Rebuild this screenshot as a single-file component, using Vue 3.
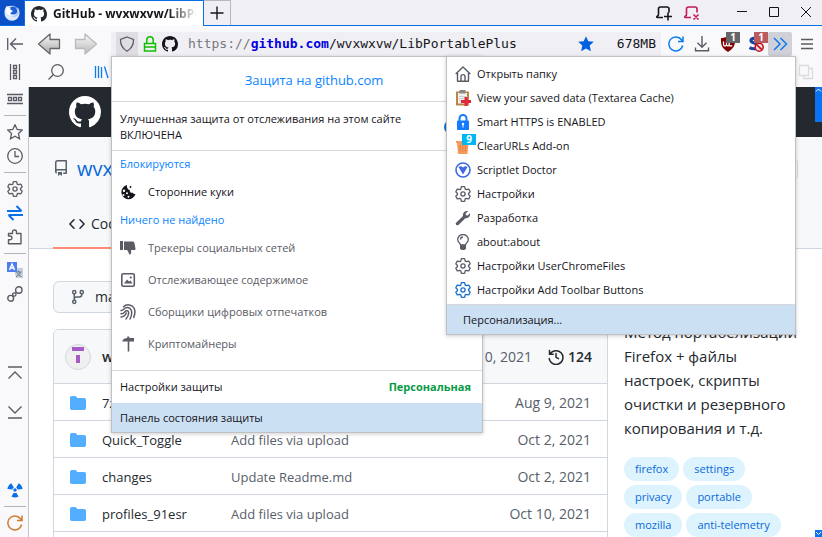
<script setup>
import { ref } from 'vue'

const address = ref('LibPortablePlus')
const protectionOn = ref(true)

const sideGroups = [
  ['rowstrip', '-', 'star', 'clock', '-', 'gear', 'swap', 'puzzle', '-', 'translate', 'chain'],
  ['top', 'bottom'],
  ['radiation', '-', 'reload'],
]
const sideLabels = {
  rowstrip: 'Панель', star: 'Закладки', clock: 'Журнал', gear: 'Настройки', swap: 'Синхронизация',
  puzzle: 'Дополнения', translate: 'Перевод', chain: 'Ссылка', top: 'Вверх', bottom: 'Вниз',
  radiation: 'Очистка', reload: 'Перезапуск',
}
const trackers = [
  { icon: 'thumb', label: 'Трекеры социальных сетей' },
  { icon: 'image', label: 'Отслеживающее содержимое' },
  { icon: 'finger', label: 'Сборщики цифровых отпечатков' },
  { icon: 'pick', label: 'Криптомайнеры' },
]
const overflow = [
  { icon: 'home', label: 'Открыть папку' },
  { icon: 'clipboard', label: 'View your saved data (Textarea Cache)' },
  { icon: 'lockfill', label: 'Smart HTTPS is ENABLED' },
  { icon: 'trash', label: 'ClearURLs Add-on', badge: '9' },
  { icon: 'doctor', label: 'Scriptlet Doctor' },
  { icon: 'gear', label: 'Настройки' },
  { icon: 'wrench', label: 'Разработка' },
  { icon: 'bulb', label: 'about:about' },
  { icon: 'gear', label: 'Настройки UserChromeFiles' },
  { icon: 'gear', label: 'Настройки Add Toolbar Buttons', tone: 'blue' },
]
const files = [
  { name: '7z', message: '', date: 'Aug 9, 2021' },
  { name: 'Quick_Toggle', message: 'Add files via upload', date: 'Oct 2, 2021' },
  { name: 'changes', message: 'Update Readme.md', date: 'Oct 2, 2021' },
  { name: 'profiles_91esr', message: 'Add files via upload', date: 'Oct 10, 2021' },
  { name: '', message: '', date: '' },
]
const topics = ['firefox', 'settings', 'privacy', 'portable', 'mozilla', 'anti-telemetry']
</script>

<template>
  <div class="browser">
    <svg class="defs" aria-hidden="true">
      <symbol id="octocat" viewBox="0 0 16 16"><path fill="currentColor" d="M8 0C3.58 0 0 3.58 0 8c0 3.54 2.29 6.53 5.47 7.59.4.07.55-.17.55-.38 0-.19-.01-.82-.01-1.49-2.01.37-2.53-.49-2.69-.94-.09-.23-.48-.94-.82-1.13-.28-.15-.68-.52-.01-.53.63-.01 1.08.58 1.23.82.72 1.21 1.87.87 2.33.66.07-.52.28-.87.51-1.07-1.78-.2-3.64-.89-3.64-3.95 0-.87.31-1.59.82-2.15-.08-.2-.36-1.02.08-2.12 0 0 .67-.21 2.2.82.64-.18 1.32-.27 2-.27.68 0 1.36.09 2 .27 1.53-1.04 2.2-.82 2.2-.82.44 1.1.16 1.92.08 2.12.51.56.82 1.27.82 2.15 0 3.07-1.87 3.75-3.65 3.95.29.25.54.73.54 1.48 0 1.07-.01 1.93-.01 2.2 0 .21.15.46.55.38A8.013 8.013 0 0016 8c0-4.42-3.58-8-8-8z"/></symbol>
      <symbol id="firefox" viewBox="0 0 16 16"><path fill="#dce9fb" d="M2.600 1.200C1 3 .3 5.400.5 8.200a7.500 7.500 0 0 0 15 .3c.2-2.400-.6-4.700-2.100-6.300l.1 2.300C12.500 2.500 11 1.200 9 .7z"/><circle cx="9.300" cy="5.500" r="4.100" fill="#1d5fd8"/><path fill="#a9c8f4" d="M10 1.200c2.600 1.500 3.700 4 3 6.600-.8 2.600-3.400 3.900-5.600 3.300 3.600 2.400 7.800-.5 7.300-4.600C14.300 3.600 12.500 1.800 10 1.200z"/><path fill="#fff" d="M2.600 1.200c.6 1.200 1.600 1.600 3 1.900 1.200.2 1.400 1 .9 1.800l2.400.9c-.3 1.100-1.300 1.300-2 1.700-.8.500-.6 1.500.3 1.900-2 .8-4.500-.2-5-2.500z"/></symbol>
      <symbol id="tohome" viewBox="0 0 16 16"><path class="ln" d="M.7 2v12M4 8h12M9 2.500 3.500 8 9 13.500"/></symbol>
      <symbol id="search" viewBox="0 0 16 16"><circle class="ln" cx="9.500" cy="6.500" r="5.800"/><path class="ln" d="M5.200 10.800.5 15.500"/></symbol>
      <symbol id="colstrip" viewBox="0 0 16 16"><path class="ln" d="M3.500 0v16M12.500 0v16M6.500 1.500h3v3h-3zM6.500 6.500h3v3h-3zM6.500 11.500h3v3h-3z"/></symbol>
      <symbol id="rowstrip" viewBox="0 0 16 16"><path class="ln" d="M0 3.500h16M0 12.500h16M1.500 6.500h3v3h-3zM6.500 6.500h3v3h-3zM11.500 6.500h3v3h-3z"/></symbol>
      <symbol id="library" viewBox="0 0 16 16"><path class="ln" d="M1.500 2v12M4.500 2v12M7.500 3v11M10.500 2.500 14 14"/></symbol>
      <symbol id="shield" viewBox="0 0 16 16"><path class="ln" stroke-width="1.300" d="M8 1 14.500 3.400c.2 5-1.500 8.900-6.500 11.900C3 12.300 1.300 8.400 1.500 3.400z"/></symbol>
      <symbol id="lock" viewBox="0 0 16 16"><path class="ln" stroke-width="1.500" d="M2.500 7.500h11v7.500h-11zM4.800 7.500V4a3.200 3.200 0 0 1 6.400 0v3.500M2.500 11h11"/></symbol>
      <symbol id="starfill" viewBox="0 0 16 16"><path fill="currentColor" d="m8 .2 2.300 5 5.500.6-4.100 3.700 1.200 5.700L8 12.400l-4.900 2.800 1.200-5.700L.2 5.800l5.500-.6z"/></symbol>
      <symbol id="star" viewBox="0 0 16 16"><path class="ln" d="m8 .8 2.200 4.700 5.100.6-3.800 3.500 1 5.200L8 12.200l-4.500 2.600 1-5.200L.7 6.100l5.100-.6z"/></symbol>
      <symbol id="reload" viewBox="0 0 16 16"><path class="ln" stroke-width="1.500" d="M14.700 9.500A7 7 0 1 1 13.500 3.700L15 5.500M15 .5v5H10"/></symbol>
      <symbol id="download" viewBox="0 0 16 16"><path class="ln" stroke-width="1.400" d="M8 0v11M3.500 6.800 8 11.300l4.500-4.500M1.500 11.500v3.200h13v-3.200"/></symbol>
      <symbol id="ublock" viewBox="0 0 16 16"><path fill="#800000" d="M8 0c2.500 1.500 4.500 2 7 2 .3 6.500-.5 10-7 14C1.500 12 .7 8.500 1 2c2.500 0 4.500-.5 7-2z"/><path fill="none" stroke="#fff" stroke-width="1.300" d="M3.500 5.500v3c0 2 3 2 3 0v-3M6.500 8.200c0 1.600 1.300 2.100 2.500 1.500M12 6.500a1.900 1.900 0 1 0 .2 3"/></symbol>
      <symbol id="noscript" viewBox="0 0 16 16"><path fill="none" stroke="#1746a0" stroke-width="3.200" d="M10.500 3.200C7.800 1.500 3 2 3 4.700s7 2 7 5.200-5 3.600-8.500 1.700"/><circle cx="11.200" cy="11.200" r="4" fill="#f5dcdc" stroke="#c31622" stroke-width="1.600"/><path stroke="#c31622" stroke-width="1.800" d="m8.500 8.700 5.300 5"/></symbol>
      <symbol id="chevrons" viewBox="0 0 16 16"><path class="ln" stroke-width="1.500" d="m2 2 6 6-6 6M8.500 2l6 6-6 6"/></symbol>
      <symbol id="menu" viewBox="0 0 16 16"><path class="ln" stroke-width="1.400" d="M2 3.500h12M2 8h12M2 12.500h12"/></symbol>
      <symbol id="squares" viewBox="0 0 16 16"><path class="ln" d="M1.500 1.500h9v10h-9zM10.500 4.500h4v10h-9v-3"/></symbol>
      <symbol id="clock" viewBox="0 0 16 16"><circle class="ln" cx="8" cy="8" r="7.300"/><path class="ln" d="M8 3v5.500h4"/></symbol>
      <symbol id="gear" viewBox="0 0 16 16"><path class="ln" stroke-width="1.300" stroke-linejoin="round" d="m6.300 1 .5-.4h2.400l.5.400.5 2.100 1 .6 2.100-.6.600.3 1.200 2.100-.1.600L13.500 7.500v1L15 9.900l.1.600-1.200 2.100-.6.300-2.100-.6-1 .6-.5 2.100-.5.400H6.800l-.5-.4-.5-2.100-1-.6-2.100.6-.6-.3L.9 10.500 1 9.900l1.500-1.400v-1L1 6.100l-.1-.6 1.200-2.100.6-.3 2.100.6 1-.6z"/><circle class="ln" stroke-width="1.300" cx="8" cy="8" r="2.100"/></symbol>
      <symbol id="swap" viewBox="0 0 16 16"><path fill="none" stroke="#0a70e8" stroke-width="2" d="M0 6h14.500M9.500 1l5 5M16 10H1.500M6.500 15l-5-5"/></symbol>
      <symbol id="puzzle" viewBox="0 0 16 16"><path class="ln" stroke-width="1.400" stroke-linejoin="round" d="M1.500 14.800v-4H3a1.900 1.900 0 0 0 0-3.800H1.500V4.500h4V3a2 2 0 0 1 4 0v1.500h4.500v10.300z"/></symbol>
      <symbol id="translate" viewBox="0 0 16 16"><path fill="#c5d0da" d="M7 6h9v10H9z"/><path stroke="#62788c" fill="none" d="M8.500 10h6M11.500 8.500V10M13.500 10c-1 3-3 4-4.500 4.500M10.500 11c1 2 2 3 4 3.500"/><path fill="#4f7df0" d="M0 0h10v10H0z"/><path fill="none" stroke="#fff" stroke-width="1.400" d="M2.500 8 5 2l2.500 6M3.500 6h3"/></symbol>
      <symbol id="chain" viewBox="0 0 16 16"><circle class="ln" stroke-width="1.400" cx="11.800" cy="4" r="3.200"/><circle class="ln" stroke-width="1.400" cx="3.700" cy="12.300" r="2.900"/><circle class="ln" cx="7.300" cy="8.500" r="1.700"/><path class="ln" d="m8.500 7.300 1.200-1.200M6 9.800 5.200 10.600"/></symbol>
      <symbol id="top" viewBox="0 0 16 16"><path class="ln" stroke-width="1.400" d="M1 2h14M1.500 13.500 8 7l6.500 6.500"/></symbol>
      <symbol id="bottom" viewBox="0 0 16 16"><path class="ln" stroke-width="1.400" d="M1 14h14M1.500 2.500 8 9l6.500-6.500"/></symbol>
      <symbol id="radiation" viewBox="0 0 16 16"><g fill="#0a70e8"><circle cx="8" cy="8" r="1.700"/><path d="M.4 7A8 8 0 0 1 4.300 1.200L6.800 5.400A3 3 0 0 0 5.300 7.600zM15.600 7a8 8 0 0 0-3.900-5.800L9.200 5.400a3 3 0 0 1 1.500 2.200zM4.500 14.500c2 1.300 5 1.300 7 0L9.300 10.800a3 3 0 0 1-2.600 0z"/></g></symbol>
      <symbol id="cookie" viewBox="0 0 16 16"><path fill="currentColor" fill-rule="evenodd" d="M7 1a7.200 7.200 0 1 0 8.500 9c-1.300.2-2.200-.3-2.700-1.300-2 .5-3.300-.8-3-2.500C7.700 5.500 6.500 3.500 7 1zM4 5.500a1.200 1.200 0 1 1 0 2.400 1.200 1.200 0 0 1 0-2.400zm3 2.800a1 1 0 1 1 0 2 1 1 0 0 1 0-2zM3.500 10a1 1 0 1 1 0 2 1 1 0 0 1 0-2zm5 1.800a1 1 0 1 1 0 2 1 1 0 0 1 0-2z"/><circle cx="10.500" cy="3" r=".9" fill="currentColor"/></symbol>
      <symbol id="thumb" viewBox="0 0 16 16"><path fill="currentColor" d="M0 1h3v9H0zM4 1.500h9c1 0 1.300 1 1.600 2.500l.9 4.500c.2 1-.3 1.500-1 1.500H11c.4 2 .3 4.500-1 4.500-1.500 0-1-2.500-3-4.500H4z"/></symbol>
      <symbol id="image" viewBox="0 0 16 16"><rect class="ln" stroke-width="1.600" x="1.800" y="1.800" width="12.500" height="12.500" rx="1.500"/><path fill="currentColor" d="m4 11.500 3-4 2 2 1.500-1 2 3z"/><circle cx="10.800" cy="5.500" r="1.100" fill="currentColor"/></symbol>
      <symbol id="finger" viewBox="0 0 16 16"><path class="ln" stroke-width="1.500" stroke-linecap="round" d="M3.500 2.800C6.500-.3 12 .5 14 4c1.200 2.500 1.200 6-.3 9.500M1 6.500c1.200.3 2-.5 2.700-1.200C6 2.800 10 3 11.300 6.200c.8 2.600.2 6-1.300 8.800M1 9.800c2 .2 3-.8 3.800-2C6 6 8.500 6.400 8.700 8.500c.1 2.200-.9 4.500-2.700 6.500M1 13c2.500-.2 4.300-1.500 5.300-4"/></symbol>
      <symbol id="pick" viewBox="0 0 16 16"><path fill="currentColor" d="M2.500 5.500V4.200C4 2.700 5.500 2 7.300 2V.5h2V2H14v3.500H9.300V15.500H7.700V5.500z"/></symbol>
      <symbol id="home" viewBox="0 0 16 16"><path class="ln" stroke-width="1.400" stroke-linejoin="round" d="M.7 8 8 .9 15.300 8M2.500 7v8.300h11V7M6 15v-4.500c0-2.500 4-2.500 4 0V15"/></symbol>
      <symbol id="clipboard" viewBox="0 0 16 16"><path fill="#b9864a" d="M1 1.500h13v14H1z"/><path fill="#f1f1f1" d="M3 3h9v10.500H3z"/><path fill="#888" d="M4.500 0h6v3.500h-6z"/><path stroke="#ccc" d="M4 6.500h7M4 8.500h5M4 10.500h4"/><path fill="#e3243d" d="M9.500 7h3v3H16v3h-3.500v3h-3v-3H6v-3h3.500z"/></symbol>
      <symbol id="lockfill" viewBox="0 0 16 16"><rect x="2" y="6.500" width="12" height="9.500" rx="1" fill="#147bff"/><path fill="none" stroke="#147bff" stroke-width="2" d="M4.500 7V4.500a3.500 3.500 0 0 1 7 0V7"/><circle cx="8" cy="10" r="1.200" fill="#fff"/><path fill="#fff" d="M7.500 10h1v3.500h-1z"/></symbol>
      <symbol id="trash" viewBox="0 0 16 16"><path fill="#f59b5c" d="M1 3h13v2H1zM2 5h11.500l-1 11h-9.500z"/><path stroke="#e08345" d="m5 7 .3 6.500M7.800 7v6.500M10.500 7l-.3 6.500"/></symbol>
      <symbol id="doctor" viewBox="0 0 16 16"><circle cx="8" cy="8" r="7" fill="none" stroke="#4068e0" stroke-width="1.600"/><path fill="#4068e0" d="M3.500 5c1.500-1.300 3-.8 4.500.5 1.500-1.300 3-1.800 4.500-.5L8 12.500z"/></symbol>
      <symbol id="wrench" viewBox="0 0 16 16"><path fill="currentColor" d="M13 1.200 10.600 3.600l.3 1.700 1.700.3L15 3.200c.8 3-1.600 5.600-4.600 5l-7 6.700c-1.600 1.300-3.500-.5-2.300-2.200L8 5.900C7.300 3 10 .3 13 1.200z"/></symbol>
      <symbol id="bulb" viewBox="0 0 16 16"><path class="ln" stroke-width="1.300" d="M5.500 11C5.500 9 2.700 8.500 2.700 5.500a5.300 5 0 0 1 10.600 0C13.300 8.500 10.500 9 10.500 11zM5.500 5.500c0-1.500 1-2.500 2.500-2.500"/><path fill="currentColor" d="M5 11h6v3.500L9.500 16h-3L5 14.500z"/></symbol>
      <symbol id="tabplus" viewBox="0 0 18 16"><path class="ln" stroke-width="1.600" d="M8 12.500H2.500c-1 0-1-1 0-1.500 1.500-.5 1-2 1-3V4c0-1.500.7-2 2-2H12c1.500 0 2 .7 2 2v3.500M9 11.500h8M13 7.500v8"/></symbol>
      <symbol id="tabclose" viewBox="0 0 18 16"><path class="ln" stroke-width="1.600" d="M8 12.500H2.500c-1 0-1-1 0-1.500 1.500-.5 1-2 1-3V4c0-1.500.7-2 2-2H12c1.500 0 2 .7 2 2v3.500M10.500 9.500l5 5M15.500 9.500l-5 5"/></symbol>
      <symbol id="repo" viewBox="0 0 16 16"><path fill="currentColor" fill-rule="evenodd" d="M2 2.500A2.500 2.500 0 0 1 4.500 0h8.750a.75.75 0 0 1 .75.750v12.500a.75.75 0 0 1-.75.750h-2.500a.75.75 0 1 1 0-1.500h1.750v-2h-8a1 1 0 0 0-.714 1.700.75.75 0 0 1-1.072 1.050A2.495 2.495 0 0 1 2 11.500Zm10.500-1h-8a1 1 0 0 0-1 1v6.708A2.486 2.486 0 0 1 4.500 9h8ZM5 12.250a.25.25 0 0 1 .25-.25h3.500a.25.25 0 0 1 .25.250v3.250a.25.25 0 0 1-.4.200l-1.450-1.087a.249.249 0 0 0-.3 0L5.400 15.700a.25.25 0 0 1-.4-.2Z"/></symbol>
      <symbol id="code" viewBox="0 0 16 16"><path class="ln" stroke-width="1.500" stroke-linecap="round" stroke-linejoin="round" d="M5 3.700.9 8 5 12.300M11 3.700 15.100 8 11 12.300"/></symbol>
      <symbol id="branch" viewBox="0 0 16 16"><path class="ln" stroke-width="1.500" d="M4.250 5v6M11.750 5v.5c0 1.500-.8 2.500-2.200 2.500H6.500c-1.500 0-2.250.7-2.250 2"/><g class="ln" stroke-width="1.500"><circle cx="4.250" cy="3.200" r="1.600"/><circle cx="4.250" cy="12.800" r="1.600"/><circle cx="11.750" cy="3.200" r="1.600"/></g></symbol>
      <symbol id="folder" viewBox="0 0 16 16"><path fill="currentColor" d="M1.750 1A1.750 1.750 0 0 0 0 2.750v10.500C0 14.216.784 15 1.750 15h12.500A1.750 1.750 0 0 0 16 13.250v-8.500A1.750 1.750 0 0 0 14.250 3H7.500a.25.25 0 0 1-.2-.1l-.9-1.200C6.070 1.260 5.550 1 5 1H1.750Z"/></symbol>
      <symbol id="history" viewBox="0 0 16 16"><path class="ln" stroke-width="1.500" stroke-linecap="round" d="M1.500 1.500v3.700h3.700M2 5.200A6.900 6.900 0 1 1 1.200 9.500M8 4.500V8.300l2.500 1.300"/></symbol>
      <symbol id="arrow" viewBox="0 0 24 22"><path fill="url(#metal)" stroke="currentColor" stroke-width="1.300" stroke-linejoin="round" d="M1.500 11 13 1v5.500h9.500v9H13V21z"/></symbol>
      <linearGradient id="metal" x1="0" y1="0" x2="0" y2="1"><stop offset="0" stop-color="#fafafa"/><stop offset="1" stop-color="#a9a9a9"/></linearGradient>
    </svg>

    <header class="titlebar">
      <button class="app" aria-label="Firefox"><svg class="i16"><use href="#firefox" /></svg></button>
      <div class="tab">
        <svg class="i16"><use href="#octocat" /></svg>
        <span class="tab-title">GitHub - wvxwxvw/LibPortablePlus</span>
      </div>
      <button class="newtab" aria-label="Новая вкладка"><svg class="i16" viewBox="0 0 16 16"><path class="ln" stroke-width="1.400" d="M8 1.500v13M1.500 8h13" /></svg></button>
      <div class="window-tools">
        <button class="dark" aria-label="Добавить вкладку"><svg class="i18"><use href="#tabplus" /></svg></button>
        <button class="crimson" aria-label="Закрыть вкладку"><svg class="i18"><use href="#tabclose" /></svg></button>
      </div>
      <div class="window-buttons">
        <button aria-label="Свернуть"><svg viewBox="0 0 12 12"><path class="thin" d="M1 5.500h10" /></svg></button>
        <button aria-label="Развернуть"><svg viewBox="0 0 12 12"><path class="thin" d="M1.500 1.500h9v9h-9z" /></svg></button>
        <button aria-label="Закрыть"><svg viewBox="0 0 12 12"><path class="thin" d="m1 1 10 10M11 1 1 11" /></svg></button>
      </div>
    </header>

    <nav class="navbar">
      <button class="cell" aria-label="Панель"><svg class="i16"><use href="#tohome" /></svg></button>
      <button class="back" aria-label="Назад"><svg><use href="#arrow" /></svg></button>
      <button class="forward" aria-label="Вперёд"><svg><use href="#arrow" /></svg></button>
      <div class="urlbar">
        <button class="shield" aria-label="Защита"><svg class="i16"><use href="#shield" /></svg></button>
        <svg class="i16 green"><use href="#lock" /></svg>
        <svg class="i16"><use href="#octocat" /></svg>
        <label class="address"><span class="scheme">https://</span><b>github.com</b><span>/wvxwxvw/</span><input v-model="address" aria-label="Адрес" /></label>
        <button class="blue" aria-label="Закладка"><svg class="i16"><use href="#starfill" /></svg></button>
        <span class="memory">678MB</span>
      </div>
      <div class="actions">
        <button class="azure" aria-label="Обновить"><svg class="i16"><use href="#reload" /></svg></button>
        <button aria-label="Загрузки"><svg class="i16"><use href="#download" /></svg></button>
        <button class="ext" aria-label="uBlock"><svg class="i16"><use href="#ublock" /></svg><span class="badge">1</span></button>
        <button class="ext" aria-label="NoScript"><svg class="i16"><use href="#noscript" /></svg><span class="badge red">1</span></button>
      </div>
      <button class="more" aria-label="Ещё"><svg class="i16"><use href="#chevrons" /></svg></button>
      <button class="cell" aria-label="Меню"><svg class="i16"><use href="#menu" /></svg></button>
    </nav>

    <div class="bookmarks">
      <button class="cell" aria-label="Колонка"><svg class="i16"><use href="#colstrip" /></svg></button>
      <button aria-label="Поиск"><svg class="i16"><use href="#search" /></svg></button>
      <button class="azure" aria-label="Библиотека"><svg class="i16"><use href="#library" /></svg></button>
      <button class="pale" aria-label="Окна"><svg class="i16"><use href="#squares" /></svg></button>
    </div>

    <div class="body">
      <aside class="sidebar">
        <div v-for="(group, g) in sideGroups" :key="g" class="side-group">
          <template v-for="(item, i) in group" :key="i">
            <hr v-if="item === '-'" />
            <button v-else :class="item" :aria-label="sideLabels[item]"><svg class="i16"><use :href="'#' + item" /></svg></button>
          </template>
        </div>
      </aside>

      <main class="page">
        <div class="gh-header"><a href="#" aria-label="GitHub"><svg><use href="#octocat" /></svg></a></div>
        <div class="repo-head">
          <div class="repo-title">
            <svg class="i16"><use href="#repo" /></svg>
            <a href="#">wvxwxvw</a>
            <button class="fork" aria-label="Fork"></button>
          </div>
          <a href="#" class="repo-tab"><svg class="i16"><use href="#code" /></svg>Code</a>
        </div>
        <div class="content">
          <section class="main-col">
            <button class="branch"><svg class="i16"><use href="#branch" /></svg>master</button>
            <div class="filebox">
              <div class="commit">
                <svg class="avatar" viewBox="0 0 26 26"><circle cx="13" cy="13" r="12.500" fill="#f0f0f0" stroke="#d0d7de" /><path fill="#a65bc5" d="M7 3h12v4H7zM11 11h4v8h-4z" /></svg>
                <b>wvxwxvw</b>
                <span class="when">Oct 10, 2021</span>
                <svg class="i16"><use href="#history" /></svg>
                <b>124</b>
              </div>
              <table>
                <tbody>
                  <tr v-for="(file, i) in files" :key="i">
                    <td class="kind"><svg class="i16"><use href="#folder" /></svg></td>
                    <td class="name">{{ file.name }}</td>
                    <td class="message">{{ file.message }}</td>
                    <td class="date">{{ file.date }}</td>
                  </tr>
                </tbody>
              </table>
            </div>
          </section>
          <section class="about">
            <p>Метод портабелизации Firefox + файлы настроек, скрипты очистки и резервного копирования и т.д.</p>
            <div class="topics"><a v-for="t in topics" :key="t" href="#">{{ t }}</a></div>
          </section>
        </div>
        <div class="scroll-thumb"><svg viewBox="0 0 7 7"><path fill="none" stroke="#fff" d="m1 4.500 2.500-2.500L6 4.500" /></svg></div>
        <div class="scroll-end"><svg viewBox="0 0 7 7"><path fill="none" stroke="#fff" d="m1 2 2.500 2.500L6 2" /></svg></div>
      </main>
    </div>

    <section class="popup protection">
      <h2>Защита на github.com</h2>
      <label class="etp">
        <span>Улучшенная защита от отслеживания на этом сайте ВКЛЮЧЕНА</span>
        <input v-model="protectionOn" type="checkbox" />
      </label>
      <h3>Блокируются</h3>
      <div class="tracker on"><svg class="i16"><use href="#cookie" /></svg>Сторонние куки</div>
      <h3>Ничего не найдено</h3>
      <div v-for="t in trackers" :key="t.icon" class="tracker"><svg class="i16"><use :href="'#' + t.icon" /></svg>{{ t.label }}</div>
      <button class="settings"><span>Настройки защиты</span><b>Персональная</b></button>
      <button class="dashboard">Панель состояния защиты</button>
    </section>

    <section class="popup overflow">
      <div class="overflow-list">
        <button v-for="o in overflow" :key="o.label">
          <span class="glyph" :class="o.tone"><svg class="i16"><use :href="'#' + o.icon" /></svg><span v-if="o.badge" class="count">{{ o.badge }}</span></span>
          {{ o.label }}
        </button>
      </div>
      <button class="customize">Персонализация...</button>
    </section>
  </div>
</template>

<style>
body { margin: 0; overflow: hidden; }
</style>

<style scoped>
* { box-sizing: border-box; }
.browser { position: relative; display: flex; flex-direction: column; height: 100vh; overflow: hidden; background: #f9f9fb; color: #15141a; font: 11px/16px "Open Sans", "Noto Sans", sans-serif; }
.defs { position: absolute; width: 0; height: 0; }
button { display: flex; align-items: center; justify-content: center; border: 0; padding: 0; background: none; color: #5b5b66; font: inherit; }
a { text-decoration: none; }
svg { display: block; flex: none; }
.i16 { width: 16px; height: 16px; }
.i18 { width: 18px; height: 16px; }
.ln { fill: none; stroke: currentColor; }
.ln:not([stroke-width]) { stroke-width: 1.3; }
.thin { fill: none; stroke: currentColor; }
.blue { color: #0060df; }
.azure { color: #0a7cf0; }
.green { color: #12bc00; }

.titlebar { display: flex; flex: none; height: 26px; background: #f0f0f4; border-bottom: 1px solid #0a70e8; }
.titlebar button { color: #15141a; }
.titlebar .app { width: 24px; background: #0c50c8; }
.tab { display: flex; align-items: center; gap: 6px; width: 180px; height: 26px; padding: 0 6px; border: 1px solid #0a70e8; border-bottom: 0; background: #fff; overflow: hidden; color: #24292f; }
.tab-title { flex: 1; overflow: hidden; white-space: nowrap; font-size: 12px; font-weight: 700; color: #15141a; mask-image: linear-gradient(to right, #000 80%, transparent); }
.titlebar .newtab { width: 27px; border-top: 1px solid #b8b8bc; border-right: 1px solid #b8b8bc; }
.window-tools { display: flex; gap: 10px; margin-left: auto; padding-right: 25px; }
.titlebar .crimson { color: #c4185a; }
.window-buttons { display: flex; }
.window-buttons button { width: 32px; padding-bottom: 2px; }
.window-buttons svg { width: 12px; height: 12px; }

.navbar { display: flex; flex: none; align-items: center; height: 31px; padding-top: 6px; padding-bottom: 1px; }
.cell { flex: none; width: 30px; height: 24px; }
.back { width: 37px; color: #666; }
.forward { width: 38px; margin-right: 6px; color: #aaa; opacity: .8; }
.back svg, .forward svg { width: 24px; height: 22px; }
.forward svg { transform: scaleX(-1); }
.urlbar { display: flex; flex: 1; align-items: center; gap: 4px; height: 24px; padding: 0 5px; background: #f0f0f4; min-width: 0; }
.urlbar .shield { width: 22px; height: 24px; background: #dedee2; }
.urlbar .blue { color: #0060df; }
.address { display: flex; flex: 1; align-items: center; padding-left: 6px; min-width: 0; font: 13px/20px "DejaVu Sans Mono", monospace; color: #15141a; }
.address .scheme { color: #77777d; }
.address b { color: #0000e0; }
.address input { flex: 1; min-width: 0; border: 0; padding: 0; background: none; color: inherit; font: inherit; outline: 0; }
.memory { padding-left: 19px; font: 13px/20px "DejaVu Sans Mono", monospace; }
.actions { display: flex; align-items: center; gap: 10px; padding: 0 2px 0 7px; }
.ext { position: relative; margin-right: 2px; }
.badge { position: absolute; left: 6px; top: -4px; width: 14px; height: 11px; background: #66666a; color: #fff; font: 700 10px/11px "Open Sans", sans-serif; text-align: center; }
.badge.red { background: #b85c60; }
.more { width: 24px; height: 24px; border-radius: 2px; background: #d0d0d8; }
.more, .navbar .azure { color: #0a7cf0; }

.bookmarks { display: flex; flex: none; align-items: center; height: 30px; }
.bookmarks button:nth-child(2) { margin: 0 30px 0 18px; }
.bookmarks .azure { color: #0a7cf0; }
.pale { margin-left: auto; padding-right: 8px; }
.bookmarks .pale { color: #dcdce0; }

.body { display: flex; flex: 1; min-height: 0; }
.sidebar { display: flex; flex: none; flex-direction: column; justify-content: space-between; width: 29px; padding-bottom: 2px; border-right: 1px solid #c4c4c8; }
.side-group { display: flex; flex-direction: column; }
.sidebar button { height: 24px; padding-left: 2px; }
.sidebar hr { width: 22px; margin: 4px 3px 4px 4px; border: 0; border-top: 1px solid #b4b4b8; }
.sidebar .bottom { margin-top: 15px; }
.sidebar .reload { color: #d07a2e; }

.page { position: relative; flex: 1; min-width: 0; overflow: hidden; background: #fff; color: #24292f; font: 14px/20px "Open Sans", "Noto Sans", sans-serif; }
.gh-header { display: flex; align-items: center; height: 50px; padding-left: 40px; background: #24292f; color: #fff; }
.gh-header a { color: inherit; }
.gh-header svg { width: 32px; height: 32px; }
.repo-head { height: 112px; padding: 17px 24px 0 24px; background: #f6f8fa; border-bottom: 1px solid #d0d7de; }
.repo-title { display: flex; align-items: center; gap: 8px; height: 30px; font-size: 20px; color: #57606a; }
.repo-title svg { margin-bottom: 3px; }
.repo-title a { color: #0969da; }
.fork { width: 60px; height: 24px; margin-left: auto; border: 1px solid #d8dce0; border-radius: 6px; }
.repo-tab { display: inline-flex; align-items: center; gap: 6px; height: 48px; margin-top: 17px; padding: 0 16px; border-bottom: 2px solid #fd8c73; color: #24292f; }
.content { display: flex; gap: 16px; padding: 32px 16px 0 24px; }
.main-col { flex: 1; min-width: 0; }
.branch { gap: 9px; height: 32px; padding: 0 16px; border: 1px solid #d0d7de; border-radius: 6px; background: #f6f8fa; color: #24292f; }
.branch svg { color: #57606a; }
.filebox { margin-top: 16px; border: 1px solid #d0d7de; border-radius: 6px 6px 0 0; overflow: hidden; }
.commit { display: flex; align-items: center; height: 53px; padding: 0 15px 0 11px; background: #f6f8fa; }
.commit b { font-weight: 600; }
.avatar { width: 26px; height: 26px; margin-right: 11px; }
.when { margin-left: auto; margin-right: 16px; color: #57606a; }
.commit .i16 { margin-right: 4px; }
table { width: 100%; border-collapse: collapse; table-layout: fixed; }
td { height: 37px; padding: 2px 0 0; border-top: 1px solid #d0d7de; white-space: nowrap; }
.kind { width: 48px; padding-left: 16px; color: #54aeff; }
.name { width: 129px; font-size: 13px; }
.message { color: #57606a; font-size: 13px; }
.date { width: 110px; padding-right: 16px; text-align: right; color: #57606a; }
.about { width: 182px; flex: none; padding-top: 39px; }
.about p { margin: 0 0 17px; font-size: 15px; line-height: 24px; }
.topics { display: flex; flex-wrap: wrap; gap: 4px; }
.topics a { padding: 0 11px; border-radius: 12px; background: #ddf4ff; color: #0969da; font-size: 11px; line-height: 24px; }
.scroll-thumb, .scroll-end { position: absolute; right: 0; top: 0; width: 7px; height: 35px; background: #0a74f0; }
.scroll-end { top: auto; bottom: 0; height: 7px; }

.popup { position: absolute; top: 56px; border: 1px solid #c0c0c4; background: #fff; box-shadow: 0 1px 4px rgba(0, 0, 0, .2); }
.popup button { color: #15141a; }
.protection { left: 111px; width: 372px; }
h2, h3 { margin: 0; font-weight: 400; color: #0a84ff; }
h2 { padding: 2px 0 0 34px; border-bottom: 1px solid #d8d8dc; font-size: 13px; line-height: 42px; text-align: center; }
.etp { display: flex; align-items: center; justify-content: space-between; height: 49px; padding: 1px 8px 0; border-bottom: 1px solid #d8d8dc; }
.etp span { width: 300px; }
.etp input { appearance: none; width: 30px; height: 14px; margin: 0; border-radius: 7px; background: #0a70d8; }
h3 { padding: 4px 8px 3px; font-size: 11px; line-height: 18px; }
.tracker { display: flex; align-items: center; gap: 12px; height: 32px; padding: 0 8px; color: #5b5b66; }
.tracker.on { height: 31px; color: #15141a; }
.protection .settings { justify-content: space-between; width: 100%; height: 33px; margin-top: 10px; padding: 0 11px 0 8px; border-top: 1px solid #d8d8dc; }
.settings b { color: #0a9a46; }
.protection .dashboard { justify-content: flex-start; width: 100%; height: 29px; padding: 0 8px; background: #cce0f4; }
.overflow { right: 26px; width: 350px; }
.overflow-list { padding: 5px 8px 2px; }
.overflow-list button { justify-content: flex-start; gap: 6px; width: 100%; height: 24px; }
.glyph { position: relative; color: #5b5b66; }
.popup .glyph.blue { color: #1670d0; }
.count { position: absolute; left: 7px; top: -4px; width: 14px; height: 11px; background: #00b7f5; color: #fff; font: 700 10px/11px "Open Sans", sans-serif; text-align: center; }
.overflow .customize { justify-content: flex-start; width: 100%; height: 30px; padding: 0 16px; border-top: 1px solid #d8d8dc; background: #cce0f4; }
</style>
